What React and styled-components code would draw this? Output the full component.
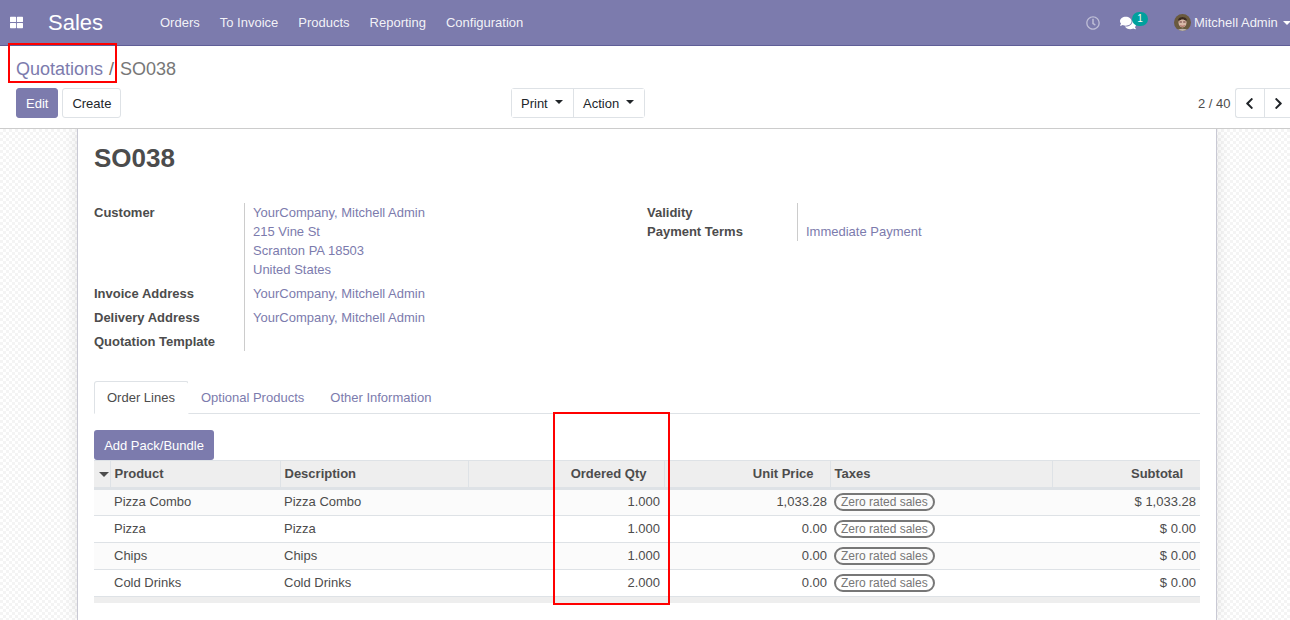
import React from "react";
import styled, { createGlobalStyle } from "styled-components";
import { FaThLarge, FaRegClock, FaComments, FaChevronLeft, FaChevronRight } from "react-icons/fa";

const Global = createGlobalStyle`
  html, body { margin: 0; padding: 0; height: 620px; overflow: hidden; background: #fff; }
  body { font-family: "Liberation Sans", Arial, sans-serif; font-size: 13px; color: #4c4c4c; line-height: 19px; }
  * { box-sizing: border-box; }
`;

const Page = styled.div`
  position: relative; width: 1290px; height: 620px; overflow: hidden;
  display: flex; flex-direction: column;
`;
const Navbar = styled.header`
  position: relative; z-index: 2; height: 46px; flex: none; background: #7c7bad; border-bottom: 1px solid #5f5e97;
  display: flex; align-items: center; color: #fff; white-space: nowrap;
`;
const AppsButton = styled.span`
  width: 48px; padding-left: 10px; display: flex; align-items: center; font-size: 13px; color: #fff;
`;
const Brand = styled.span`
  width: 112px; font-size: 22px; color: #fff; margin-top: -1px;
`;
const Menu = styled.nav`
  display: flex; gap: 20px; flex: 1; color: rgba(255,255,255,.9);
`;
const NavItem = styled.span`
  color: rgba(255,255,255,.92);
`;
const Systray = styled.div`
  display: flex; align-items: center; flex: none; width: 204px;
`;
const ClockIcon = styled.span`
  display: flex; font-size: 14px; color: rgba(255,255,255,.5); margin-right: 20px;
`;
const ChatIcon = styled.span`
  position: relative; display: flex; font-size: 16px; color: #fff; margin-right: 38px;
`;
const Badge = styled.span`
  position: absolute; left: 12px; top: -3px; min-width: 16px; height: 14px; border-radius: 7px;
  background: #00a09d; color: #fff; font-size: 10px; line-height: 14px; text-align: center;
`;
const Avatar = styled.svg`
  width: 17px; height: 17px; margin-right: 3px; border-radius: 50%; flex: none;
`;
const UserName = styled.span`
  color: rgba(255,255,255,.92);
`;
const NavCaret = styled.span`
  margin-left: 5px; border-top: 4px solid #fff; border-left: 4px solid transparent; border-right: 4px solid transparent;
`;

const ControlPanel = styled.section`
  position: relative; z-index: 1; height: 83px; flex: none; background: #fff; border-bottom: 1px solid #ccc; padding: 0 0 0 16px;
  display: flex; flex-direction: column;
`;
const Breadcrumb = styled.div`
  height: 42px; padding-top: 12px; font-size: 18px; line-height: 22px; color: #6e6e6e; display: flex;
`;
const CrumbLink = styled.span`
  color: #7c7bad; margin-right: 6px;
`;
const CrumbCurrent = styled.span`
  color: #777; margin-left: 6px;
`;
const Toolbar = styled.div`
  display: grid; grid-template-columns: 495px 687px 1fr; height: 30px;
`;
const ButtonRow = styled.div`
  display: flex; gap: 4px;
`;
const PrimaryButton = styled.button`
  height: 30px; padding: 0 9px; border: 1px solid #7c7bad; border-radius: 3px; background: #7c7bad;
  color: #fff; font: inherit; font-size: 13px;
`;
const SecondaryButton = styled.button`
  height: 30px; padding: 0 9px; border: 1px solid #dee2e6; border-radius: 3px; background: #fff;
  color: #212529; font: inherit; font-size: 13px;
`;
const Group = styled.div`
  display: flex; height: 30px; width: fit-content; border: 1px solid #dee2e6; border-radius: 3px;
`;
const GroupButton = styled.button`
  height: 28px; width: ${p => p.$w}px; padding: 0 0 0 9px; border: 0; background: #fff; color: #212529;
  border-left: ${p => p.$divided ? "1px solid #dee2e6" : "0"};
  font: inherit; font-size: 13px; display: flex; align-items: center;
`;
const Caret = styled.span`
  margin-left: 7px; margin-top: -3px; border-top: 4px solid #212529; border-left: 4px solid transparent; border-right: 4px solid transparent;
`;
const Pager = styled.div`
  display: flex; align-items: center; justify-content: flex-start; white-space: nowrap;
`;
const PagerText = styled.span`
  margin-right: 4px; color: #4c4c4c;
`;
const PagerButtons = styled.div`
  display: flex; height: 30px; width: 60px; flex: none; border: 1px solid #dee2e6; border-radius: 3px; border-right: 0;
`;
const PagerButton = styled.span`
  width: 28px; display: flex; align-items: center; justify-content: center; font-size: 13px; color: #212529;
  & + & { width: 29px; border-left: 1px solid #dee2e6; }
`;

const Content = styled.main`
  flex: 1; min-height: 0; display: flex; padding-left: 77px;
  background-color: #fff;
  background-image: repeating-conic-gradient(#f4f4f4 0 25%, #fff 0 50%);
  background-size: 6px 6px;
`;
const Sheet = styled.article`
  width: 1140px; flex: none; background: #fff; padding: 0 16px; border-left: 1px solid #c9c9d4; border-right: 1px solid #c9c9d4;
  box-shadow: 0 0 14px rgba(0,0,0,.1);
`;
const Title = styled.h1`
  margin: 13px 0 0; font-size: 26px; line-height: 32px; font-weight: 700; color: #4c4c4c; height: 32px;
`;
const InfoGrid = styled.div`
  margin-top: 29px; display: grid; grid-template-columns: 553px 1fr; height: 148px;
`;
const InfoTable = styled.div`
  display: grid; grid-template-columns: 150px 1fr; align-content: start;
`;
const Label = styled.div`
  font-weight: 700; padding-bottom: ${p => p.$bottom || 0}px; color: #4c4c4c;
`;
const Value = styled.div`
  border-left: 1px solid #ccc; padding-left: 8px; color: #7c7bad; padding-bottom: ${p => p.$bottom || 0}px;
  min-height: 19px;
`;
const Tabs = styled.div`
  margin-top: 30px; display: flex; height: 33px; border-bottom: 1px solid #dee2e6;
`;
const Tab = styled.div`
  height: ${p => p.$active ? 33 : 32}px; padding: ${p => p.$active ? 6 : 7}px 13px 0 ${p => p.$active ? 12 : 13}px; color: ${p => p.$active ? "#4c4c4c" : "#7c7bad"};
  background: #fff;
  ${p => p.$active ? "margin-right: -1px; border: 1px solid #dee2e6; border-bottom-color: #fff; border-radius: 3px 3px 0 0;" : ""}
`;
const AddButton = styled.button`
  display: block; margin-top: 16px; height: 30px; width: 120px; padding: 0; border: 0; border-radius: 3px;
  background: #7c7bad; color: #fff; font: inherit; font-size: 13px;
`;
const Table = styled.table`
  width: 1106px; border-collapse: collapse; table-layout: fixed;
`;
const HeadRow = styled.tr`
  height: 28px; background: #eee; border-top: 1px solid #dee2e6; border-bottom: 3px solid #dee2e6;
`;
const Th = styled.th`
  padding: 0 ${p => p.$pr || 4}px 1px 4px; font-weight: 700; font-size: 13px; color: #4c4c4c;
  text-align: ${p => p.$pr ? "right" : "left"};
  border-left: ${p => p.$noLeft ? "0" : "1px solid #dee2e6"};
`;
const Row = styled.tr`
  height: 27px; border-bottom: 1px solid #dee2e6; background: ${p => p.$odd ? "#fbfbfb" : "#fff"};
  &:first-child td { padding-bottom: 3px; }
`;
const Td = styled.td`
  padding: 0 ${p => p.$pr || 4}px 1px 4px; white-space: nowrap; color: #4c4c4c;
  text-align: ${p => p.$pr ? "right" : "left"};
`;
const Pill = styled.span`
  display: inline-block; height: 18px; line-height: 14px; padding: 0 5px; font-size: 12px; color: #777;
  border: 2px solid #777; border-radius: 9px; vertical-align: middle;
`;
const SortCaret = styled.span`
  display: inline-block; margin-left: 1px; vertical-align: middle; border-top: 5px solid #4c4c4c; border-left: 5px solid transparent; border-right: 5px solid transparent;
`;
const FooterBar = styled.div`
  height: 6px; width: 1106px; background: #eee;
`;
const RedBox = styled.div`
  position: absolute; z-index: 3; left: ${p => p.$x}px; top: ${p => p.$y}px; width: ${p => p.$w}px; height: ${p => p.$h}px;
  border: 2px solid #f00; pointer-events: none;
`;

const lines = [
  ["Pizza Combo", "1.000", "1,033.28", "$ 1,033.28"],
  ["Pizza", "1.000", "0.00", "$ 0.00"],
  ["Chips", "1.000", "0.00", "$ 0.00"],
  ["Cold Drinks", "2.000", "0.00", "$ 0.00"],
];

export default function App() {
  return (
    <Page>
      <Global />
      <Navbar>
        <AppsButton><FaThLarge /></AppsButton>
        <Brand>Sales</Brand>
        <Menu>
          {["Orders", "To Invoice", "Products", "Reporting", "Configuration"].map(m => <NavItem key={m}>{m}</NavItem>)}
        </Menu>
        <Systray>
          <ClockIcon><FaRegClock /></ClockIcon>
          <ChatIcon><FaComments /><Badge>1</Badge></ChatIcon>
          <Avatar viewBox="0 0 17 17">
            <rect width="17" height="17" fill="#6a5a3e" />
            <ellipse cx="8.5" cy="8.5" rx="4" ry="5" fill="#d8b8a8" />
            <path d="M4 6c1-4 8-4 9 0l-1 1c-2-2-5-2-7 0z" fill="#3a2a20" />
            <path d="M5.5 8h2.4M9.2 8h2.4" stroke="#6b3a3a" strokeWidth="1" />
            <path d="M6.5 11.5c1 1 3 1 4 0" stroke="#a0564e" strokeWidth="1" fill="none" />
            <path d="M3 17c1-3 10-3 11 0z" fill="#b8b0ac" />
          </Avatar>
          <UserName>Mitchell Admin</UserName>
          <NavCaret />
        </Systray>
      </Navbar>
      <ControlPanel>
        <Breadcrumb>
          <CrumbLink>Quotations</CrumbLink>/<CrumbCurrent>SO038</CrumbCurrent>
        </Breadcrumb>
        <Toolbar>
          <ButtonRow>
            <PrimaryButton>Edit</PrimaryButton>
            <SecondaryButton>Create</SecondaryButton>
          </ButtonRow>
          <Group>
            <GroupButton $w={61}>Print<Caret /></GroupButton>
            <GroupButton $w={71} $divided>Action<Caret /></GroupButton>
          </Group>
          <Pager>
            <PagerText>2 / 40</PagerText>
            <PagerButtons>
              <PagerButton><FaChevronLeft /></PagerButton>
              <PagerButton><FaChevronRight /></PagerButton>
            </PagerButtons>
          </Pager>
        </Toolbar>
      </ControlPanel>
      <Content>
        <Sheet>
          <Title>SO038</Title>
          <InfoGrid>
            <InfoTable>
              <Label>Customer</Label>
              <Value $bottom={5}>YourCompany, Mitchell Admin<br />215 Vine St<br />Scranton PA 18503<br />United States</Value>
              <Label>Invoice Address</Label>
              <Value $bottom={5}>YourCompany, Mitchell Admin</Value>
              <Label>Delivery Address</Label>
              <Value $bottom={5}>YourCompany, Mitchell Admin</Value>
              <Label>Quotation Template</Label>
              <Value />
            </InfoTable>
            <InfoTable>
              <Label>Validity</Label>
              <Value />
              <Label>Payment Terms</Label>
              <Value>Immediate Payment</Value>
            </InfoTable>
          </InfoGrid>
          <Tabs>
            <Tab $active>Order Lines</Tab>
            <Tab>Optional Products</Tab>
            <Tab>Other Information</Tab>
          </Tabs>
          <AddButton>Add Pack/Bundle</AddButton>
          <Table>
            <colgroup>
              <col width="16" /><col width="170" /><col width="188" /><col width="196" />
              <col width="166" /><col width="222" /><col width="148" />
            </colgroup>
            <thead>
              <HeadRow>
                <Th $noLeft><SortCaret /></Th>
                <Th>Product</Th>
                <Th>Description</Th>
                <Th $pr={17}>Ordered Qty</Th>
                <Th $pr={16}>Unit Price</Th>
                <Th>Taxes</Th>
                <Th $pr={17}>Subtotal</Th>
              </HeadRow>
            </thead>
            <tbody>
              {lines.map((l, i) => (
                <Row key={l[0]} $odd={i % 2 === 0}>
                  <Td />
                  <Td>{l[0]}</Td>
                  <Td>{l[0]}</Td>
                  <Td $pr={4}>{l[1]}</Td>
                  <Td $pr={3}>{l[2]}</Td>
                  <Td><Pill>Zero rated sales</Pill></Td>
                  <Td $pr={4}>{l[3]}</Td>
                </Row>
              ))}
            </tbody>
          </Table>
          <FooterBar />
        </Sheet>
      </Content>
      <RedBox $x={8} $y={43} $w={109} $h={40} />
      <RedBox $x={553} $y={412} $w={117} $h={193} />
    </Page>
  );
}
